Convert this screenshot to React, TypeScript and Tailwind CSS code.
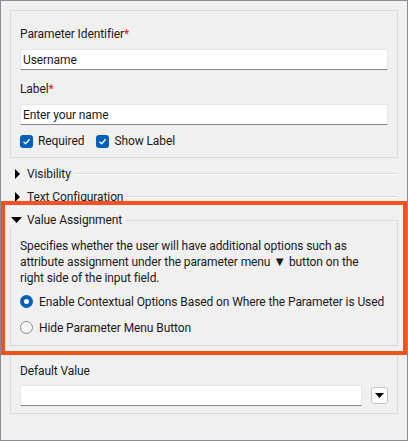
import React from "react";

const font = { fontFamily: "Roboto, 'Noto Sans', sans-serif" };

function TextBox({ value, className }: { value?: string; className?: string }) {
  return (
    <div
      className={`h-[21px] bg-white border border-[#e6e6e6] border-b-[#868686] flex items-center pl-[2px] text-[12px] text-[#1a1a1a] ${className ?? ""}`}
    >
      {value}
    </div>
  );
}

function Check({ label }: { label: string }) {
  return (
    <div className="flex items-center gap-[5px]">
      <span className="w-[13px] h-[13px] rounded-[3px] bg-[#005fb8] flex items-center justify-center">
        <svg width="9" height="9" viewBox="0 0 9 9">
          <path d="M1.5 4.8 L3.6 6.8 L7.6 2.2" fill="none" stroke="white" strokeWidth="1.3" />
        </svg>
      </span>
      <span>{label}</span>
    </div>
  );
}

function Radio({ label, checked }: { label: string; checked?: boolean }) {
  return (
    <div className="flex items-center gap-[6px] h-[16px] whitespace-nowrap">
      {checked ? (
        <span className="w-[13px] h-[13px] shrink-0 rounded-full bg-[#005fb8] flex items-center justify-center">
          <span className="w-[5px] h-[5px] rounded-full bg-white" />
        </span>
      ) : (
        <span className="w-[13px] h-[13px] shrink-0 rounded-full border border-[#8a8a8a] bg-[#f7f7f7]" />
      )}
      <span>{label}</span>
    </div>
  );
}

function RightArrow() {
  return (
    <svg width="6" height="10" viewBox="0 0 6 10" className="shrink-0">
      <polygon points="0,0 5,5 0,10" fill="#000" />
    </svg>
  );
}

function CollapsedRow({ label }: { label: string }) {
  return (
    <div className="flex items-center h-[16px]">
      <span className="w-[5px]" />
      <RightArrow />
      <span className="ml-[6px] mr-[3px]">{label}</span>
      <span className="flex-1 h-[2px] border-t border-[#dadada] border-b border-b-white" />
    </div>
  );
}

export default function App() {
  return (
    <div
      className="relative w-[408px] h-[441px] border border-[#8a8d93] bg-[#f0f0f0] px-[9px] pt-[9px] text-[12px] leading-[16px] tracking-[-0.1px] text-[#1a1a1a]"
      style={font}
    >
      {/* parameter panel */}
      <div className="border border-[#d9d9d9] h-[148px] px-[9px] pt-[15px]">
        <div>
          Parameter Identifier<span className="text-[#e81123]">*</span>
        </div>
        <TextBox value="Username" className="mt-[7px]" />
        <div className="mt-[11px]">
          Label<span className="text-[#e81123]">*</span>
        </div>
        <TextBox value="Enter your name" className="mt-[7px]" />
        <div className="mt-[8px] flex items-center gap-[12px]">
          <Check label="Required" />
          <Check label="Show Label" />
        </div>
      </div>

      <div className="mt-[8px] flex flex-col gap-[6.5px]">
        <CollapsedRow label="Visibility" />
        <CollapsedRow label="Text Configuration" />
      </div>

      {/* value assignment group */}
      <div className="mt-[15px] border border-[#d9d9d9] h-[126px] px-[9px]">
        <div className="-mt-[9px] -ml-[10px] flex items-center h-[16px]">
          <span className="flex items-center h-[16px] bg-[#f0f0f0] pl-[1px] pr-[4px]">
            <svg width="11" height="6" viewBox="0 0 11 6">
              <polygon points="0,0 11,0 5.5,6" fill="#000" />
            </svg>
            <span className="ml-[5px]">Value Assignment</span>
          </span>
        </div>
        <div className="mt-[10px] whitespace-nowrap">
          Specifies whether the user will have additional options such as
          <br />
          attribute assignment under the parameter menu <span className="text-[13px]">▼</span> button on the
          <br />
          right side of the input field.
        </div>
        <div className="mt-[8px] flex flex-col gap-[10px]">
          <Radio label="Enable Contextual Options Based on Where the Parameter is Used" checked />
          <Radio label="Hide Parameter Menu Button" />
        </div>
      </div>

      {/* default value panel */}
      <div className="mt-[6px] border border-[#d9d9d9] h-[62px] px-[9px] pt-[10px]">
        <div>Default Value</div>
        <div className="mt-[6px] flex items-center gap-[9px]">
          <TextBox className="flex-1" />
          <button className="w-[17px] h-[17px] rounded-[3px] border border-[#c4c4c4] bg-white flex items-center justify-center">
            <svg width="9" height="5" viewBox="0 0 9 5">
              <polygon points="0,0 9,0 4.5,5" fill="#000" />
            </svg>
          </button>
        </div>
      </div>

      {/* highlight annotation */}
      <div className="absolute left-0 top-[200px] w-[406px] h-[154px] border-[4px] border-[#f4511e] pointer-events-none" />
    </div>
  );
}
